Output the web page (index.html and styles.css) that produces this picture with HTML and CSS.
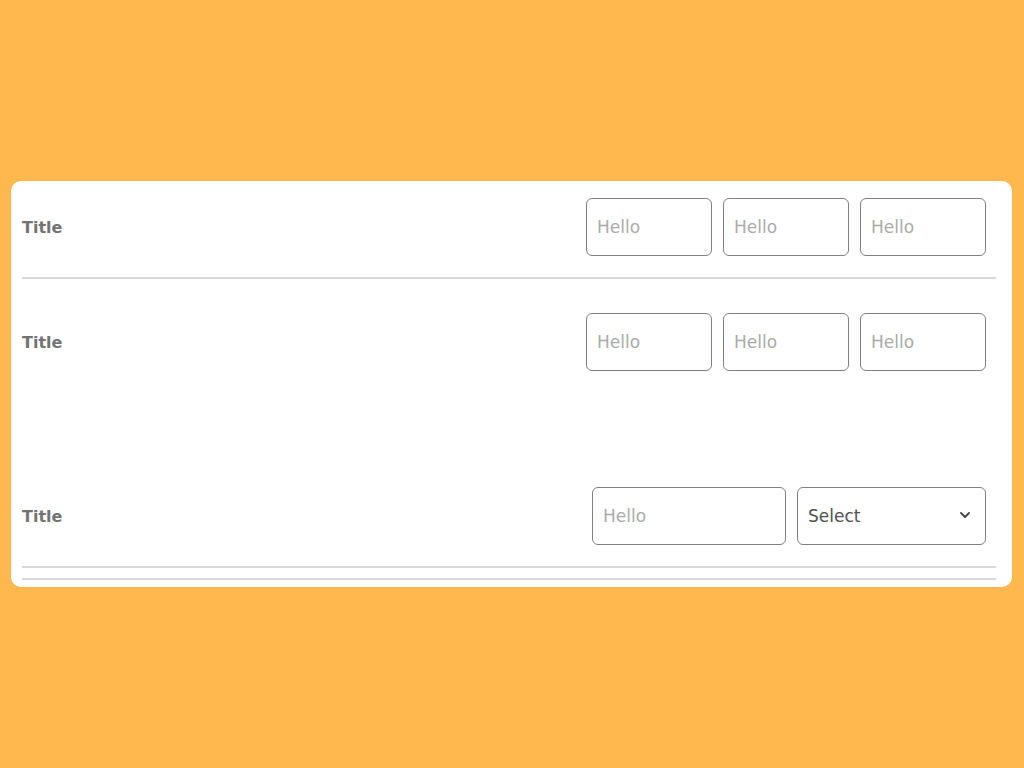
FILE: index.html
```html
<!DOCTYPE html>
<html>
<head>
<title>Form rows</title>
<link rel="stylesheet" href="styles.css">
</head>
<body>

<div class="card">
  <div class="row row-first">
    <span class="title">Title</span>
    <div class="fields">
      <input class="field" type="text" placeholder="Hello">
      <input class="field" type="text" placeholder="Hello">
      <input class="field" type="text" placeholder="Hello">
    </div>
  </div>
  <div class="divider"></div>

  <div class="row row-second">
    <span class="title">Title</span>
    <div class="fields">
      <input class="field" type="text" placeholder="Hello">
      <input class="field" type="text" placeholder="Hello">
      <input class="field" type="text" placeholder="Hello">
    </div>
  </div>

  <div class="row row-third">
    <span class="title">Title</span>
    <div class="fields">
      <input class="field field-wide" type="text" placeholder="Hello">
      <div class="select-wrap">
        <select class="field field-select">
          <option>Select</option>
        </select>
        <svg class="chevron" width="12" height="8" viewBox="0 0 12 8">
          <path d="M2 2 L6 6 L10 2" fill="none" stroke="#444" stroke-width="1.8" stroke-linecap="round" stroke-linejoin="round"/>
        </svg>
      </div>
    </div>
  </div>
  <div class="divider divider-close"></div>
  <div class="divider divider-last"></div>
</div>

</body>
</html>
```

FILE: styles.css
```css
body {
  margin: 0;
  background: #ffb84d;
  font-family: "DejaVu Sans", "Open Sans", sans-serif;
  height: 768px;
}

.card {
  position: relative;
  top: 181px;
  margin-left: 11px;
  width: 1001px;
  height: 406px;
  background: #fff;
  border-radius: 10px;
  box-sizing: border-box;
  padding-top: 17px;
}

.row {
  display: flex;
  align-items: center;
  justify-content: space-between;
  padding: 0 26px 0 11px;
}

.row-second {
  padding-top: 34px;
}

.row-third {
  padding-top: 116px;
}

.title {
  font-weight: 700;
  font-size: 16px;
  color: #737373;
}

.fields {
  display: flex;
  gap: 11px;
}

.field {
  box-sizing: border-box;
  width: 126px;
  height: 58px;
  border: 1.5px solid #808080;
  border-radius: 6px;
  padding: 0 10px;
  font-family: "DejaVu Sans", "Open Sans", sans-serif;
  font-size: 17px;
  color: #505050;
  background: #fff;
  outline: none;
}

.field::placeholder {
  color: #ababab;
}

.field-wide {
  width: 194px;
}

.select-wrap {
  position: relative;
}

.field-select {
  width: 189px;
  appearance: none;
  -webkit-appearance: none;
}

.chevron {
  position: absolute;
  right: 15px;
  top: 24px;
}

.divider {
  height: 2px;
  background: #d8d8d8;
  margin: 21px 16px 0 11px;
}

.divider-last {
  margin-top: 10px;
}
```
